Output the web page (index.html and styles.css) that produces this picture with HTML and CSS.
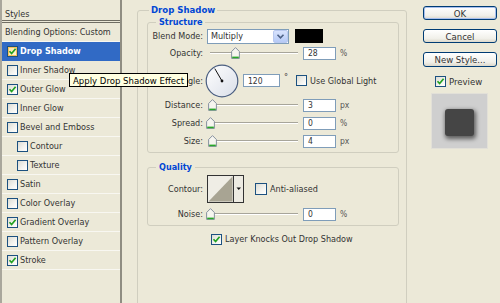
FILE: index.html
```html
<!DOCTYPE html>
<html>
<head>
<meta charset="utf-8">
<link rel="stylesheet" href="styles.css">
</head>
<body>
<div class="dialog">
  <div class="styles-panel">
    <div class="panel-head">Styles</div>
    <div class="row plain">Blending Options: Custom</div>
    <div class="row selected"><span class="cb hot"><svg width="9" height="9" viewBox="0 0 9 9"><polyline points="1.5,4.2 3.6,6.5 7.6,1.8" fill="none" stroke="#21A121" stroke-width="1.7"/></svg></span>Drop Shadow</div>
    <div class="row"><span class="cb"></span>Inner Shadow</div>
    <div class="row"><span class="cb"><svg width="9" height="9" viewBox="0 0 9 9"><polyline points="1.5,4.2 3.6,6.5 7.6,1.8" fill="none" stroke="#21A121" stroke-width="1.7"/></svg></span>Outer Glow</div>
    <div class="row"><span class="cb"></span>Inner Glow</div>
    <div class="row"><span class="cb"></span>Bevel and Emboss</div>
    <div class="row sub"><span class="cb"></span>Contour</div>
    <div class="row sub"><span class="cb"></span>Texture</div>
    <div class="row"><span class="cb"></span>Satin</div>
    <div class="row"><span class="cb"></span>Color Overlay</div>
    <div class="row"><span class="cb"><svg width="9" height="9" viewBox="0 0 9 9"><polyline points="1.5,4.2 3.6,6.5 7.6,1.8" fill="none" stroke="#21A121" stroke-width="1.7"/></svg></span>Gradient Overlay</div>
    <div class="row"><span class="cb"></span>Pattern Overlay</div>
    <div class="row"><span class="cb"><svg width="9" height="9" viewBox="0 0 9 9"><polyline points="1.5,4.2 3.6,6.5 7.6,1.8" fill="none" stroke="#21A121" stroke-width="1.7"/></svg></span>Stroke</div>
  </div>

  <div class="main">
    <fieldset class="group outer">
      <legend class="legend-outer">Drop Shadow</legend>
      <fieldset class="group structure">
        <legend class="legend-inner">Structure</legend>
        <div class="frow r-blend">
          <span class="lbl">Blend Mode:</span>
          <div class="select"><span class="sel-text">Multiply</span><span class="sel-btn"><svg width="9" height="7" viewBox="0 0 9 7"><polyline points="1.5,1.8 4.5,4.8 7.5,1.8" fill="none" stroke="#4D6185" stroke-width="1.6"/></svg></span></div>
          <div class="swatch"></div>
        </div>
        <div class="frow r-opacity">
          <span class="lbl">Opacity:</span>
          <div class="slider"><span class="thumb" style="left:23px"><svg width="9" height="12" viewBox="0 0 9 12"><path d="M4.5 0.6 L8.4 4.5 V11.4 H0.6 V4.5 Z" fill="#F6F5EF" stroke="#7B8796" stroke-width="0.9"/><path d="M1.2 10.4 H7.8" stroke="#29A629" stroke-width="1.6"/></svg></span></div>
          <div class="num">28</div><span class="unit">%</span>
        </div>
        <div class="frow r-angle">
          <span class="lbl">Angle:</span>
          <svg class="dial" width="34" height="34" viewBox="0 0 34 34"><defs><linearGradient id="dg" x1="0" y1="0" x2="1" y2="1"><stop offset="0" stop-color="#FFFFFF"/><stop offset="1" stop-color="#D9DEE8"/></linearGradient></defs><circle cx="17" cy="17" r="15.8" fill="url(#dg)" stroke="#4A5E80" stroke-width="1.2"/><line x1="17" y1="17" x2="9.8" y2="4.6" stroke="#111" stroke-width="1"/><circle cx="17" cy="17" r="1.4" fill="#111"/></svg>
          <div class="num wide">120</div><span class="deg">°</span>
          <span class="cb gl"></span><span class="cb-label">Use Global Light</span>
        </div>
        <div class="frow r-dist">
          <span class="lbl">Distance:</span>
          <div class="slider"><span class="thumb" style="left:0px"><svg width="9" height="12" viewBox="0 0 9 12"><path d="M4.5 0.6 L8.4 4.5 V11.4 H0.6 V4.5 Z" fill="#F6F5EF" stroke="#7B8796" stroke-width="0.9"/><path d="M1.2 10.4 H7.8" stroke="#29A629" stroke-width="1.6"/></svg></span></div>
          <div class="num">3</div><span class="unit">px</span>
        </div>
        <div class="frow r-spread">
          <span class="lbl">Spread:</span>
          <div class="slider"><span class="thumb" style="left:-2px"><svg width="9" height="12" viewBox="0 0 9 12"><path d="M4.5 0.6 L8.4 4.5 V11.4 H0.6 V4.5 Z" fill="#F6F5EF" stroke="#7B8796" stroke-width="0.9"/><path d="M1.2 10.4 H7.8" stroke="#29A629" stroke-width="1.6"/></svg></span></div>
          <div class="num">0</div><span class="unit">%</span>
        </div>
        <div class="frow r-size">
          <span class="lbl">Size:</span>
          <div class="slider"><span class="thumb" style="left:0px"><svg width="9" height="12" viewBox="0 0 9 12"><path d="M4.5 0.6 L8.4 4.5 V11.4 H0.6 V4.5 Z" fill="#F6F5EF" stroke="#7B8796" stroke-width="0.9"/><path d="M1.2 10.4 H7.8" stroke="#29A629" stroke-width="1.6"/></svg></span></div>
          <div class="num">4</div><span class="unit">px</span>
        </div>
      </fieldset>

      <fieldset class="group quality">
        <legend class="legend-inner">Quality</legend>
        <div class="frow r-contour">
          <span class="lbl">Contour:</span>
          <svg class="contour" width="37" height="28" viewBox="0 0 37 28"><rect x="0.5" y="0.5" width="36" height="27" fill="#EDEBE2" stroke="#333"/><rect x="1.5" y="1.5" width="24" height="25" fill="#EFEDE5"/><polygon points="1.5,26.5 25.5,1.5 25.5,26.5" fill="#A8A493"/><line x1="26.5" y1="1" x2="26.5" y2="27" stroke="#333"/><polygon points="29.5,12.5 34,12.5 31.75,15" fill="#111"/></svg>
          <span class="cb aa"></span><span class="cb-label">Anti-aliased</span>
        </div>
        <div class="frow r-noise">
          <span class="lbl">Noise:</span>
          <div class="slider"><span class="thumb" style="left:-2px"><svg width="9" height="12" viewBox="0 0 9 12"><path d="M4.5 0.6 L8.4 4.5 V11.4 H0.6 V4.5 Z" fill="#F6F5EF" stroke="#7B8796" stroke-width="0.9"/><path d="M1.2 10.4 H7.8" stroke="#29A629" stroke-width="1.6"/></svg></span></div>
          <div class="num">0</div><span class="unit">%</span>
        </div>
      </fieldset>

      <div class="knock"><span class="cb"><svg width="9" height="9" viewBox="0 0 9 9"><polyline points="1.5,4.2 3.6,6.5 7.6,1.8" fill="none" stroke="#21A121" stroke-width="1.7"/></svg></span><span class="cb-label">Layer Knocks Out Drop Shadow</span></div>
    </fieldset>
  </div>

  <div class="side">
    <div class="btn default">OK</div>
    <div class="btn">Cancel</div>
    <div class="btn">New Style...</div>
    <div class="preview-row"><span class="cb"><svg width="9" height="9" viewBox="0 0 9 9"><polyline points="1.5,4.2 3.6,6.5 7.6,1.8" fill="none" stroke="#21A121" stroke-width="1.7"/></svg></span><span class="cb-label">Preview</span></div>
    <div class="preview"><div class="preview-square"></div></div>
  </div>

  <div class="tooltip">Apply Drop Shadow Effect</div>
</div>
</body>
</html>
```

FILE: styles.css
```css
html, body {
  margin: 0;
  padding: 0;
}
body {
  width: 500px;
  height: 303px;
  overflow: hidden;
  background: #ECE9D8;
  font-family: "DejaVu Sans Condensed", "DejaVu Sans", "Liberation Sans", sans-serif;
  font-size: 9px;
  color: #333;
}
.dialog {
  position: relative;
  display: flex;
  align-items: flex-start;
  height: 303px;
  overflow: hidden;
}

/* ---------- left styles list ---------- */
.styles-panel {
  flex: none;
  width: 122px;
  height: 320px;
  box-sizing: border-box;
  border-left: 2px solid #A9A79C;
  border-right: 2px solid #8F8D82;
  background: #ECE9D8;
}
.panel-head {
  height: 23px;
  box-sizing: border-box;
  padding: 8px 0 0 3px;
  display: flex;
  align-items: center;
  border-bottom: 3px double #6F6D63;
}
.row {
  height: 19px;
  box-sizing: border-box;
  display: flex;
  align-items: center;
  gap: 2px;
  padding-left: 5px;
  border-bottom: 1px solid #F8F7F1;
}
.row.plain {
  padding-left: 3px;
}
.row.sub {
  padding-left: 15px;
}
.row.selected {
  background: #316AC5;
  color: #fff;
  font-weight: bold;
  border-bottom-color: #316AC5;
}

/* ---------- checkbox ---------- */
.cb {
  flex: none;
  width: 11px;
  height: 11px;
  box-sizing: border-box;
  border: 1px solid #1C5180;
  background: linear-gradient(135deg, #DCDCD4 0%, #F4F4F0 60%, #FFFFFF 100%);
  display: inline-flex;
  align-items: center;
  justify-content: center;
}
.cb.hot {
  box-shadow: inset 0 0 0 1px #F7C25A;
  background: linear-gradient(135deg, #FBE3A4, #FFF6DA);
}
.cb-label {
  margin-left: 3px;
  white-space: nowrap;
}

/* ---------- middle groups ---------- */
.main {
  flex: none;
  width: 270px;
  margin-left: 15px;
  padding-top: 4px;
}
.group {
  margin: 0;
  border: 1px solid #D0CEBF;
  border-radius: 3px;
  min-width: 0;
}
.outer {
  padding: 0 7px 0 9px;
  height: 320px;
  box-sizing: border-box;
}
.legend-outer,
.legend-inner {
  color: #0046D5;
  font-weight: bold;
  line-height: 12px;
  height: 12px;
}
.legend-outer {
  padding: 0 2px;
  margin-left: 2px;
  font-size: 9.5px;
}
.legend-inner {
  padding: 0 3px;
  margin-left: 8px;
}
.structure {
  padding: 0 0 4px 0;
}
.quality {
  padding: 0 0 4px 0;
  margin-top: 8px;
}
.frow {
  display: flex;
  align-items: center;
  white-space: nowrap;
}
.lbl {
  flex: none;
  width: 55px;
  text-align: right;
}
.r-blend { height: 16px; }
.r-opacity { height: 14px; margin-top: 2px; }
.r-angle { height: 35px; margin-top: 3px; }
.r-dist { height: 14px; }
.r-spread { height: 14px; margin-top: 4px; }
.r-size { height: 14px; margin-top: 4px; }
.r-contour { height: 28px; margin-top: 2px; }
.r-noise { height: 14px; margin-top: 4px; }

.select {
  flex: none;
  margin-left: 4px;
  width: 82px;
  height: 15px;
  box-sizing: border-box;
  border: 1px solid #7F9DB9;
  background: #fff;
  display: flex;
  align-items: center;
}
.sel-text {
  padding-left: 3px;
}
.sel-btn {
  margin-left: auto;
  width: 15px;
  height: 13px;
  box-sizing: border-box;
  border: 1px solid #B9C9EF;
  border-radius: 2px;
  background: linear-gradient(#D8E3FD, #B6CAF6);
  display: flex;
  align-items: center;
  justify-content: center;
}
.swatch {
  flex: none;
  width: 28px;
  height: 14px;
  margin-left: 6px;
  background: #000;
}
.slider {
  flex: none;
  position: relative;
  width: 90px;
  height: 14px;
  margin-left: 5px;
}
.slider::before {
  content: "";
  position: absolute;
  left: 2px;
  right: 0;
  top: 6px;
  height: 1px;
  background: #A7A59A;
  border-bottom: 1px solid #FFFFFF;
}
.thumb {
  position: absolute;
  top: 1px;
  width: 9px;
  height: 12px;
  display: block;
  line-height: 0;
}
.num {
  flex: none;
  width: 33px;
  height: 13px;
  box-sizing: border-box;
  margin-left: 5px;
  border: 1px solid #7F9DB9;
  background: #fff;
  padding-left: 4px;
  display: flex;
  align-items: center;
  font-size: 8.5px;
}
.num.wide {
  width: 37px;
  margin-left: 4px;
}
.unit {
  margin-left: 4px;
  font-size: 8.5px;
  color: #555;
}
.deg {
  margin-left: 4px;
  align-self: flex-start;
  margin-top: 9px;
}
.dial {
  flex: none;
  margin-left: 2px;
}
.cb.gl {
  margin-left: 8px;
}
.contour {
  flex: none;
  margin-left: 4px;
}
.cb.aa {
  margin-left: 11px;
  width: 12px;
  height: 12px;
}
.knock {
  display: flex;
  align-items: center;
  height: 12px;
  margin-top: 7px;
  padding-left: 64px;
}

/* ---------- right column ---------- */
.side {
  flex: none;
  width: 74px;
  margin-left: 16px;
  padding-top: 6px;
  display: flex;
  flex-direction: column;
}
.btn {
  height: 14px;
  box-sizing: border-box;
  border: 1px solid #003C74;
  border-radius: 3px;
  background: linear-gradient(#FFFFFF, #F1F0EA 70%, #DCD8CB);
  display: flex;
  align-items: center;
  justify-content: center;
  font-size: 9.5px;
  margin-bottom: 9px;
}
.btn.default {
  box-shadow: inset 0 0 0 1px #A9C0EE;
}
.btn + .btn + .btn {
  height: 15px;
  margin-bottom: 0;
}
.preview-row {
  display: flex;
  align-items: center;
  height: 11px;
  margin-top: 9px;
  padding-left: 12px;
  font-size: 9.5px;
}
.preview {
  margin-top: 6px;
  margin-left: 8px;
  width: 57px;
  height: 56px;
  box-sizing: border-box;
  border: 1px solid #E2E0D8;
  background: #CFCFCF;
  display: flex;
  padding: 15px 0 0 13px;
}
.preview-square {
  width: 29px;
  height: 27px;
  border-radius: 3px;
  background: #454545;
  box-shadow: 1px 2px 4px 1px rgba(0, 0, 0, 0.55);
}

/* ---------- tooltip overlay ---------- */
.tooltip {
  position: absolute;
  left: 69px;
  top: 73px;
  height: 14px;
  box-sizing: border-box;
  padding: 0 3px;
  border: 1px solid #000;
  background: #FFFFE1;
  display: flex;
  align-items: center;
  font-size: 9.5px;
  color: #000;
  white-space: nowrap;
}
```
